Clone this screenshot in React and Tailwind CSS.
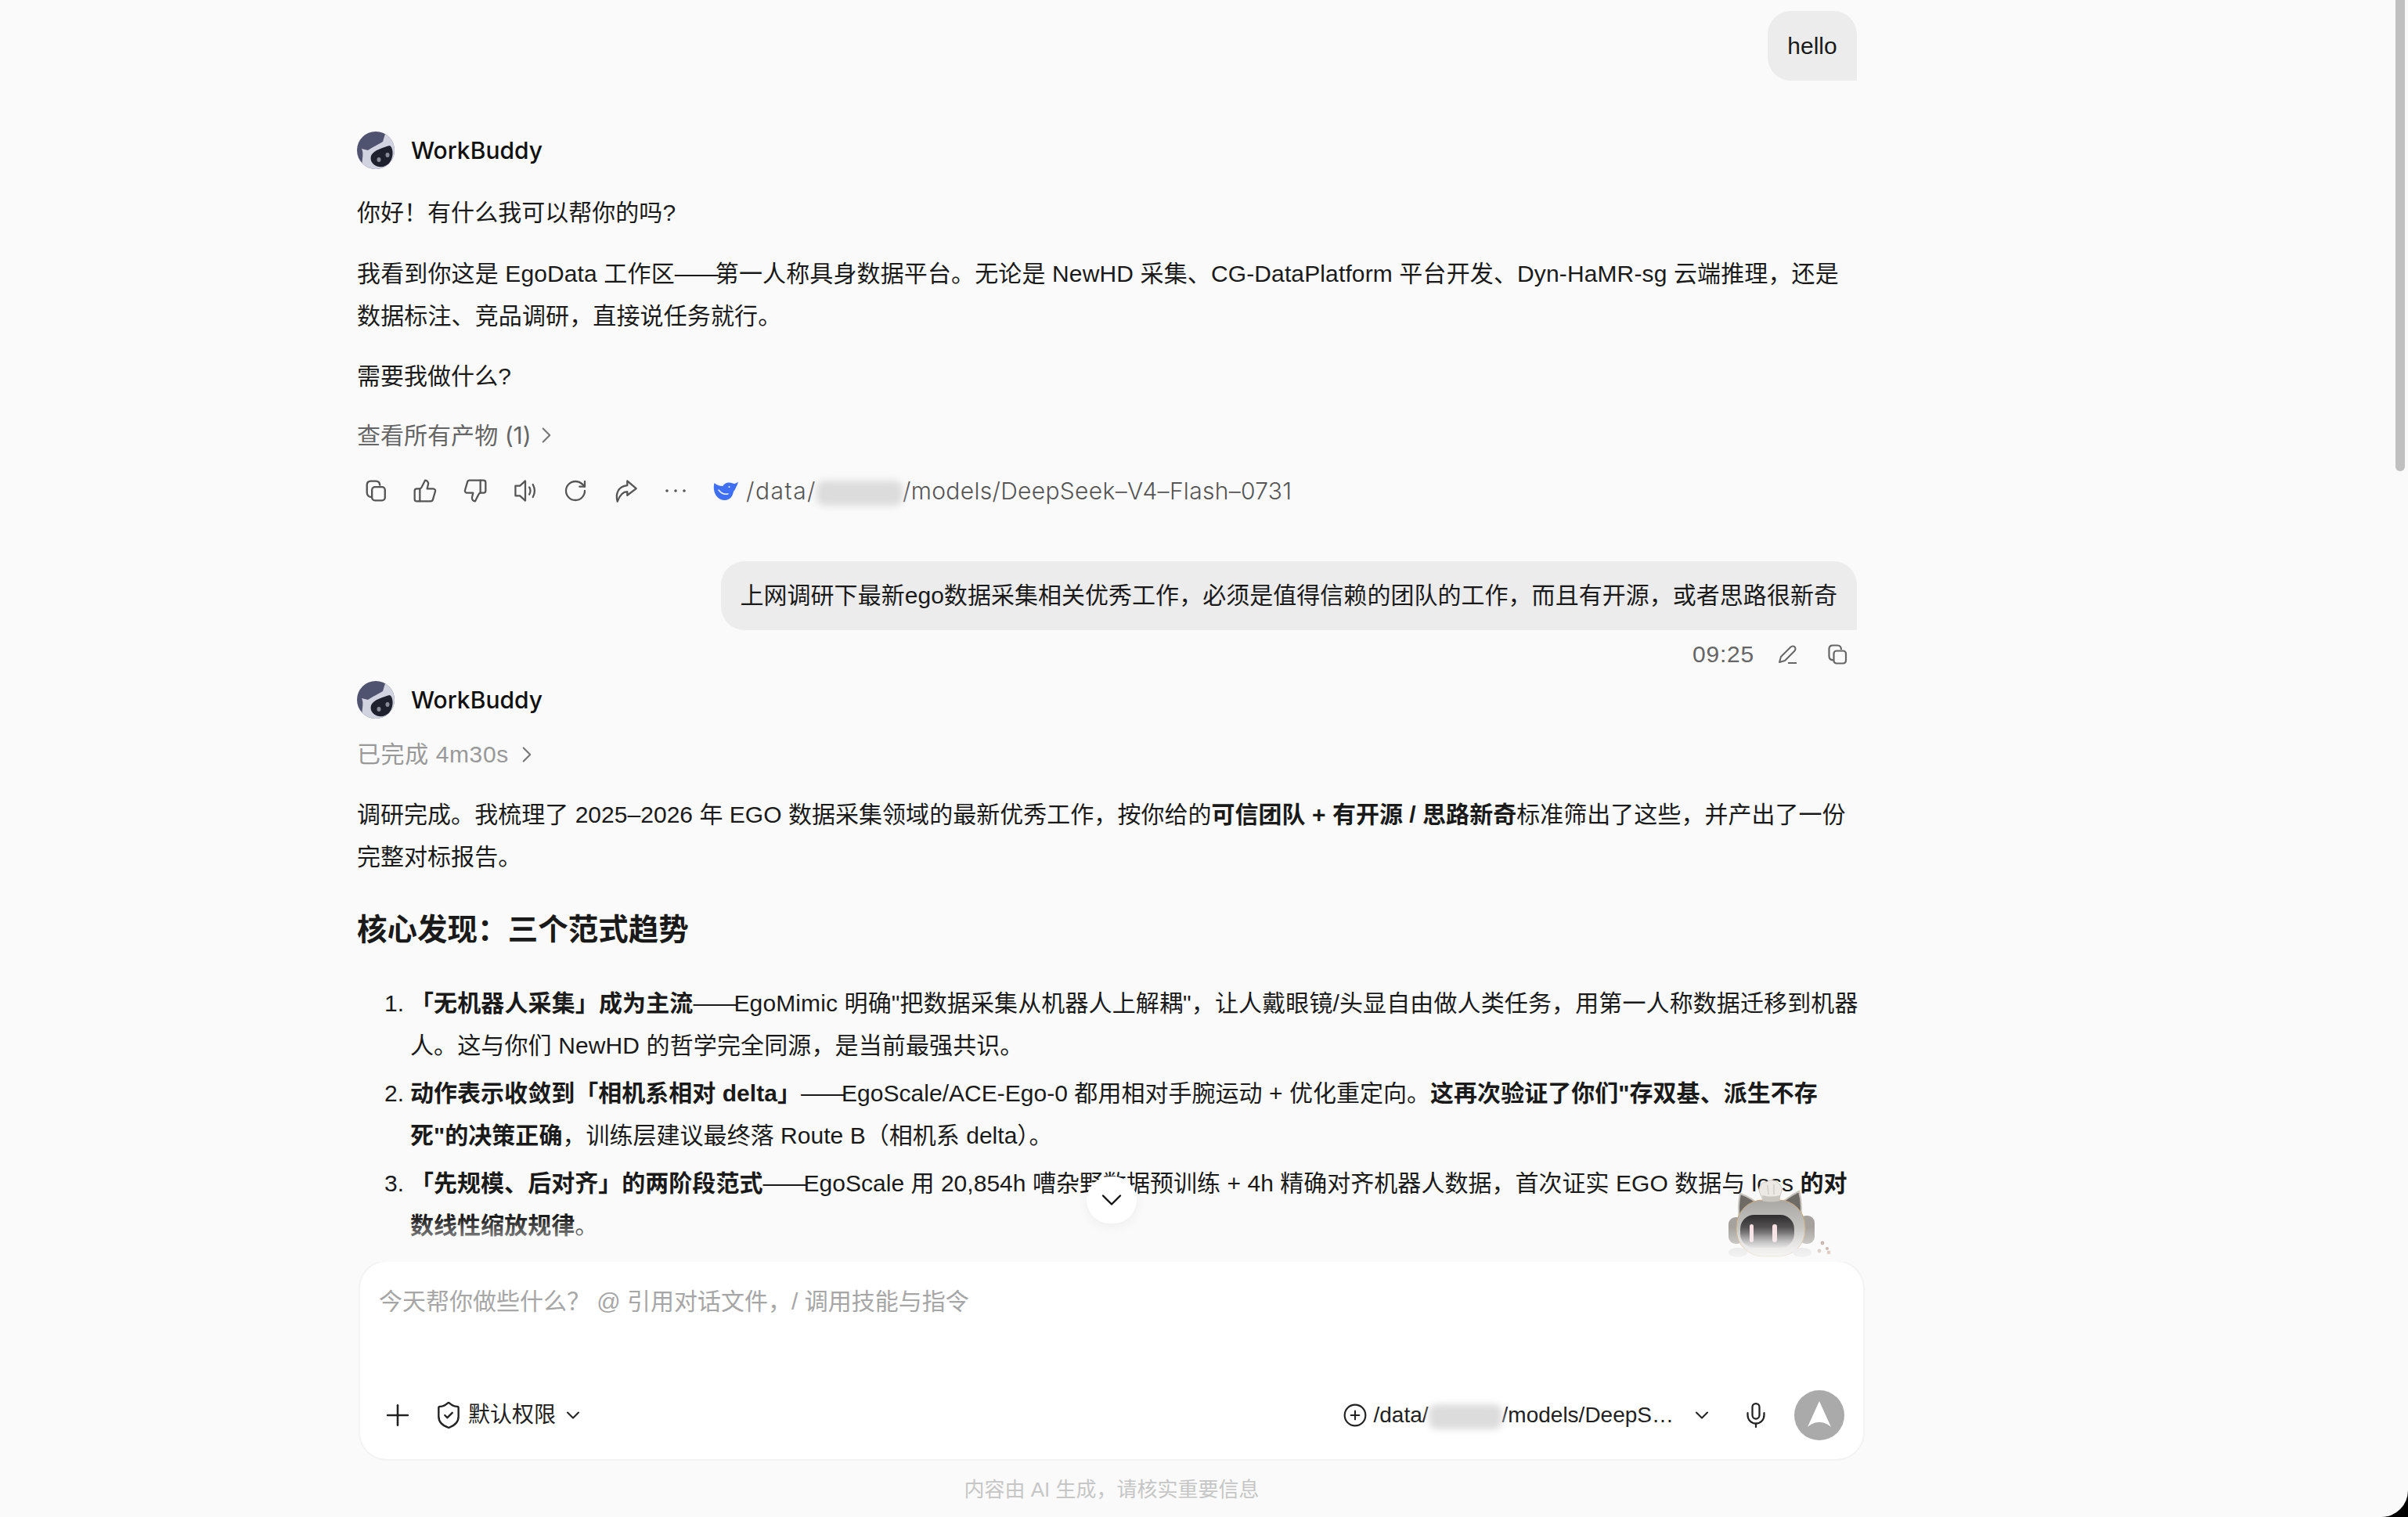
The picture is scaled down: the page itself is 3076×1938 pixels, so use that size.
import React from "react";
import { ChevronRight, ChevronDown, Plus, Mic, CirclePlus, ThumbsUp, ThumbsDown, RotateCw, ShieldCheck } from "lucide-react";

const FONT = { fontFamily: '"Liberation Sans", "Noto Sans CJK SC", sans-serif' };
const INTER = { fontFamily: 'Inter, "Noto Sans CJK SC", sans-serif' };

function Avatar() {
  return (
    <svg width="48" height="48" viewBox="0 0 48 48" className="shrink-0">
      <defs>
        <clipPath id="av"><circle cx="24" cy="24" r="24" /></clipPath>
      </defs>
      <g clipPath="url(#av)">
        <rect width="48" height="48" fill="#50536f" />
        <path d="M6 22 L14 24 C20 20 28 16 33 13 L36 3 L48 8 L48 48 L8 48 C4 40 10 30 6 22Z" fill="#d2d3e0" />
        <path d="M18 31 C21 24 34 20 42 18 C48 22 47 40 36 44 C28 48 15 42 18 31Z" fill="#20212f" />
        <ellipse cx="28" cy="36" rx="2.5" ry="3" fill="#8b8c99" />
        <ellipse cx="39" cy="30" rx="2.5" ry="3" fill="#8b8c99" />
      </g>
    </svg>
  );
}

function CopyIcon({ size = 30 }) {
  return (
    <svg width={size} height={size} viewBox="0 0 28 28" fill="none" stroke="currentColor" strokeWidth="2.2">
      <rect x="9.5" y="9.5" width="15.5" height="16" rx="3.5" />
      <path d="M9.5 21.5 C6 21.5 3.5 19.5 3.5 16 V7 C3.5 4 5.5 2.5 8 2.5 H14 C17 2.5 19 4.5 19 8" />
    </svg>
  );
}

function ShareIcon() {
  return (
    <svg width="32" height="32" viewBox="0 0 28 28" fill="none" stroke="currentColor" strokeWidth="2" strokeLinejoin="round">
      <path d="M16 3 L26 11.5 L16 19 V15 C11 15 7.5 19 5 26 C2.5 17 6 9 16 8 Z" />
    </svg>
  );
}

function SpeakerIcon() {
  return (
    <svg width="32" height="32" viewBox="0 0 28 28" fill="none" stroke="currentColor" strokeWidth="2" strokeLinejoin="round" strokeLinecap="round">
      <path d="M14 3 V25 L8 19.5 H3 V8.5 H8 Z" />
      <path d="M18.5 10 C20 12.5 20 15.5 18.5 18" />
      <path d="M22.5 7 C25 11.5 25 16.5 22.5 21" />
    </svg>
  );
}

function Dots() {
  return (
    <svg width="32" height="32" viewBox="0 0 32 32" fill="currentColor">
      <circle cx="5" cy="16" r="1.8" />
      <circle cx="16" cy="16" r="1.8" />
      <circle cx="27" cy="16" r="1.8" />
    </svg>
  );
}

function WhaleIcon() {
  return (
    <svg width="32" height="26" viewBox="0 0 32 26">
      <path d="M1.5 3 C-1 12 3 24 14 25 C21 25.5 25 20 26 14 C27 13 28 11 29 9 C30 7 31.5 4 32 1.5 C29.5 3.5 27 4.5 25 3.5 C20 1 14 3 12.5 7 C8 7 4.5 5.5 1.5 3Z" fill="#3f6ff5" />
      <path d="M7 12 C10 16 14 18 19 17" fill="none" stroke="#fafafa" strokeWidth="1.5" strokeLinecap="round" />
      <circle cx="20.5" cy="8" r="1.1" fill="#fafafa" />
    </svg>
  );
}

function Mascot() {
  return (
    <svg width="170" height="130" viewBox="0 0 170 130" className="absolute left-[2190px] top-[1490px]">
      <defs>
        <linearGradient id="fade" x1="0" y1="0" x2="0" y2="1">
          <stop offset="0.6" stopColor="#fff" />
          <stop offset="0.92" stopColor="#fff" stopOpacity="0.12" />
        </linearGradient>
        <mask id="mfade"><rect width="170" height="130" fill="url(#fade)" /></mask>
        <linearGradient id="head" x1="0" y1="0" x2="0" y2="1">
          <stop offset="0" stopColor="#a9a7a3" />
          <stop offset="1" stopColor="#e4e3e1" />
        </linearGradient>
        <linearGradient id="face" x1="0" y1="0" x2="0" y2="1">
          <stop offset="0" stopColor="#2e2d2e" />
          <stop offset="0.55" stopColor="#626161" />
          <stop offset="1" stopColor="#c9c8c7" />
        </linearGradient>
        <filter id="soft"><feGaussianBlur stdDeviation="0.6" /></filter>
      </defs>
      <g mask="url(#mfade)" filter="url(#soft)">
        <path d="M32 68 C30 54 31 44 33 35 C42 38 52 44 60 52 Z" fill="#6e6a65" stroke="#c8c4bd" strokeWidth="2" />
        <path d="M110 66 C112 52 111 42 108 32 C98 37 88 44 80 52 Z" fill="#6e6a65" stroke="#c8c4bd" strokeWidth="2" />
        <rect x="18" y="65" width="20" height="34" rx="9" fill="#a5a29d" />
        <rect x="108" y="63" width="20" height="36" rx="9" fill="#a5a29d" />
        <rect x="28" y="43" width="88" height="72" rx="34" fill="url(#head)" stroke="#c8a878" strokeWidth="1" />
        <rect x="33" y="62" width="69" height="42" rx="18" fill="url(#face)" />
        <rect x="45" y="74" width="5" height="23" rx="2.5" fill="#f7dfe3" />
        <rect x="74" y="74" width="6" height="23" rx="3" fill="#f7dfe3" />
        <path d="M62 44 C60 36 55 32 58 26 C60 20 66 20 69 19 C74 16 80 19 83 23 C88 27 86 33 84 37 L83 44 Z" fill="#ece8e3" stroke="#c9c5bf" strokeWidth="1" />
        <path d="M68 24 L69 36 M76 23 L76 36" stroke="#cfcac4" strokeWidth="1.4" fill="none" />
        <path d="M62 44 Q72 47 83 44 L84 37 Q72 40 61 37 Z" fill="#c9c5bf" />
        <ellipse cx="30" cy="110" rx="12" ry="6" fill="#d8d8d8" />
        <ellipse cx="112" cy="110" rx="12" ry="6" fill="#d8d8d8" />
      </g>
      <g fill="#c9b8ae">
        <circle cx="138" cy="98" r="2.4" />
        <circle cx="144" cy="105" r="2" />
        <circle cx="134" cy="108" r="2.4" fill="#ddd0c8" />
        <circle cx="146" cy="110" r="2.4" fill="#ddd0c8" />
      </g>
    </svg>
  );
}

function Redact({ width }) {
  return (
    <span className="inline-block h-[32px] align-middle bg-[#dcdcdc] blur-[4px] rounded-[10px]" style={{ width }} />
  );
}

function Dash() {
  return <span className="tracking-[-4px]">——</span>;
}

function Speaker({ mt }) {
  return (
    <div className={`flex items-center gap-[21px] ${mt}`}>
      <Avatar />
      <span className="text-[30px] font-medium text-[#111]" style={INTER}>WorkBuddy</span>
    </div>
  );
}

export default function App() {
  return (
    <div className="relative w-[3076px] h-[1938px] bg-black overflow-hidden" style={FONT}>
      <div className="relative flex flex-col h-full bg-[#fafafa] rounded-br-[34px] overflow-hidden">
        {/* messages */}
        <div className="h-[1610px] shrink-0 overflow-hidden pl-[456px] pt-[14px] text-[30px] leading-[54px] tracking-[0.03px] text-[#1a1a1a]">
          <div className="w-[1916px]">
            <div className="flex justify-end">
              <div className="w-[114px] h-[89px] flex items-center justify-center bg-[#ececec] rounded-[30px] rounded-br-none">hello</div>
            </div>

            <Speaker mt="mt-[62px]" />
            <p className="mt-[26px] h-[54px]">你好！有什么我可以帮你的吗?</p>
            <p className="mt-[24px] whitespace-nowrap tracking-[0.13px]">
              我看到你这是 EgoData 工作区<Dash />第一人称具身数据平台。无论是 NewHD 采集、CG-DataPlatform 平台开发、Dyn-HaMR-sg 云端推理，还是<br />
              数据标注、竞品调研，直接说任务就行。
            </p>
            <p className="mt-[23px]">需要我做什么?</p>
            <div className="mt-[21px] flex items-center gap-[2px] text-[#666]" style={INTER}>
              查看所有产物 (1) <ChevronRight size={34} strokeWidth={1.5} className="text-[#777]" />
            </div>
            <div className="mt-[22px] h-[44px] flex items-center text-[#555] pl-[9px]">
              <div className="flex items-center gap-[32px]">
                <CopyIcon />
                <ThumbsUp size={32} strokeWidth={1.7} />
                <ThumbsDown size={32} strokeWidth={1.7} />
                <SpeakerIcon />
                <RotateCw size={32} strokeWidth={1.7} />
                <ShareIcon />
                <Dots />
              </div>
              <div className="ml-[32px] flex items-center gap-[10px] whitespace-nowrap font-light tracking-[0.3px]" style={INTER}>
                <WhaleIcon />
                <span><span className="tracking-[1.5px]">/data/</span><Redact width="110px" />/models/DeepSeek–V4–Flash–0731</span>
              </div>
            </div>

            <div className="mt-[68px] flex justify-end">
              <div className="h-[88px] flex items-center px-[25px] bg-[#ececec] rounded-[30px] rounded-br-none whitespace-nowrap">
                上网调研下最新ego数据采集相关优秀工作，必须是值得信赖的团队的工作，而且有开源，或者思路很新奇
              </div>
            </div>
            <div className="mt-[6px] h-[50px] flex items-center justify-end gap-[24px] text-[#666] pr-[11px]">
              <span className="tracking-[0.8px]">09:25</span>
              <svg width="28" height="28" viewBox="0 0 28 28" fill="none" stroke="currentColor" strokeWidth="2" strokeLinejoin="round" className="ml-[4px]">
                <path d="M4 24 L6 17 L18 5 C20 3 23 3 24 5 C25 7 25 8 23 10 L11 22 Z" />
                <path d="M15 25 H26" />
              </svg>
              <span className="ml-[12px]"><CopyIcon size={28} /></span>
            </div>

            <Speaker mt="mt-[6px]" />
            <div className="mt-[16px] flex items-center gap-[6px] text-[#999]">
              <span className="tracking-[0.6px]">已完成 4m30s</span> <ChevronRight size={34} strokeWidth={1.5} className="text-[#777]" />
            </div>
            <p className="mt-[23px] whitespace-nowrap">
              调研完成。我梳理了 2025–2026 年 EGO 数据采集领域的最新优秀工作，按你给的<b className="font-semibold">可信团队 + 有开源 / 思路新奇</b>标准筛出了这些，并产出了一份<br />
              完整对标报告。
            </p>
            <h3 className="mt-[39px] text-[38.5px] leading-[54px] font-semibold">核心发现：三个范式趋势</h3>

            <ol className="mt-[40px] whitespace-nowrap">
              <li className="flex tracking-[0.12px]">
                <span className="w-[68px] pl-[35px] shrink-0">1.</span>
                <span><b className="font-semibold">「无机器人采集」成为主流</b><Dash />EgoMimic 明确"把数据采集从机器人上解耦"，让人戴眼镜/头显自由做人类任务，用第一人称数据迁移到机器<br />人。这与你们 NewHD 的哲学完全同源，是当前最强共识。</span>
              </li>
              <li className="flex mt-[7px]">
                <span className="w-[68px] pl-[35px] shrink-0">2.</span>
                <span><b className="font-semibold">动作表示收敛到「相机系相对 delta」</b><Dash />EgoScale/ACE-Ego-0 都用相对手腕运动 + 优化重定向。<b className="font-semibold">这再次验证了你们"存双基、派生不存<br />死"的决策正确</b>，训练层建议最终落 Route B（相机系 delta）。</span>
              </li>
              <li className="flex mt-[7px]">
                <span className="w-[68px] pl-[35px] shrink-0">3.</span>
                <span><b className="font-semibold">「先规模、后对齐」的两阶段范式</b><Dash />EgoScale 用 20,854h 嘈杂野数据预训练 + 4h 精确对齐机器人数据，首次证实 EGO 数据与 loss <b className="font-semibold">的对<br />数线性缩放规律</b>。</span>
              </li>
            </ol>
          </div>
        </div>

        {/* composer */}
        <div className="ml-[458px] w-[1924px] h-[256px] shrink-0 relative flex flex-col justify-between bg-white border-2 border-[#f3f3f3] rounded-[36px] px-[24px] pb-[24px]">
          <div className="pt-[26px] text-[30px] leading-[50px] text-[#a6a6a6]">今天帮你做些什么？ @ 引用对话文件，/ 调用技能与指令</div>
          <div className="flex items-center justify-between text-[28px] text-[#222]">
            <div className="flex items-center">
              <Plus size={44} strokeWidth={1.4} className="ml-[2px]" />
              <ShieldCheck size={38} strokeWidth={1.5} className="ml-[24px]" />
              <span className="ml-[6px]">默认权限</span>
              <ChevronDown size={28} strokeWidth={1.8} className="ml-[8px]" />
            </div>
            <div className="flex items-center">
              <CirclePlus size={32} strokeWidth={1.6} />
              <span className="ml-[8px] whitespace-nowrap">/data/<Redact width="94px" />/models/DeepS…</span>
              <ChevronDown size={28} strokeWidth={1.8} className="ml-[22px]" />
              <Mic size={36} strokeWidth={1.5} className="ml-[37px]" />
              <div className="ml-[31px] w-[64px] h-[64px] rounded-full bg-[#aaaaaa] flex items-center justify-center">
                <svg width="36" height="40" viewBox="0 0 36 40"><path d="M18 2 L33 35 C27 30 23 29 18 29 C13 29 9 30 3 35 Z" fill="#fff" /></svg>
              </div>
            </div>
          </div>
        </div>

        <div className="mt-[20px] text-center text-[26px] leading-[34px] text-[#c6c6c6] w-[2840px]">内容由 AI 生成，请核实重要信息</div>

        {/* overlays */}
        <div className="absolute left-0 top-[1555px] w-full h-[57px] bg-gradient-to-b from-transparent to-[#fafafa]" />
        <Mascot />
        <div className="absolute left-[1388px] top-[1503px] w-[64px] h-[60px] rounded-full bg-white shadow-[0_4px_14px_rgba(0,0,0,0.05)] flex items-center justify-center">
          <ChevronDown size={44} strokeWidth={1.3} className="text-[#111]" />
        </div>
        {/* scrollbar */}
        <div className="absolute left-[3060px] top-0 w-[12px] h-[602px] bg-[#c0c0c0] rounded-b-[6px]" />
      </div>
    </div>
  );
}
